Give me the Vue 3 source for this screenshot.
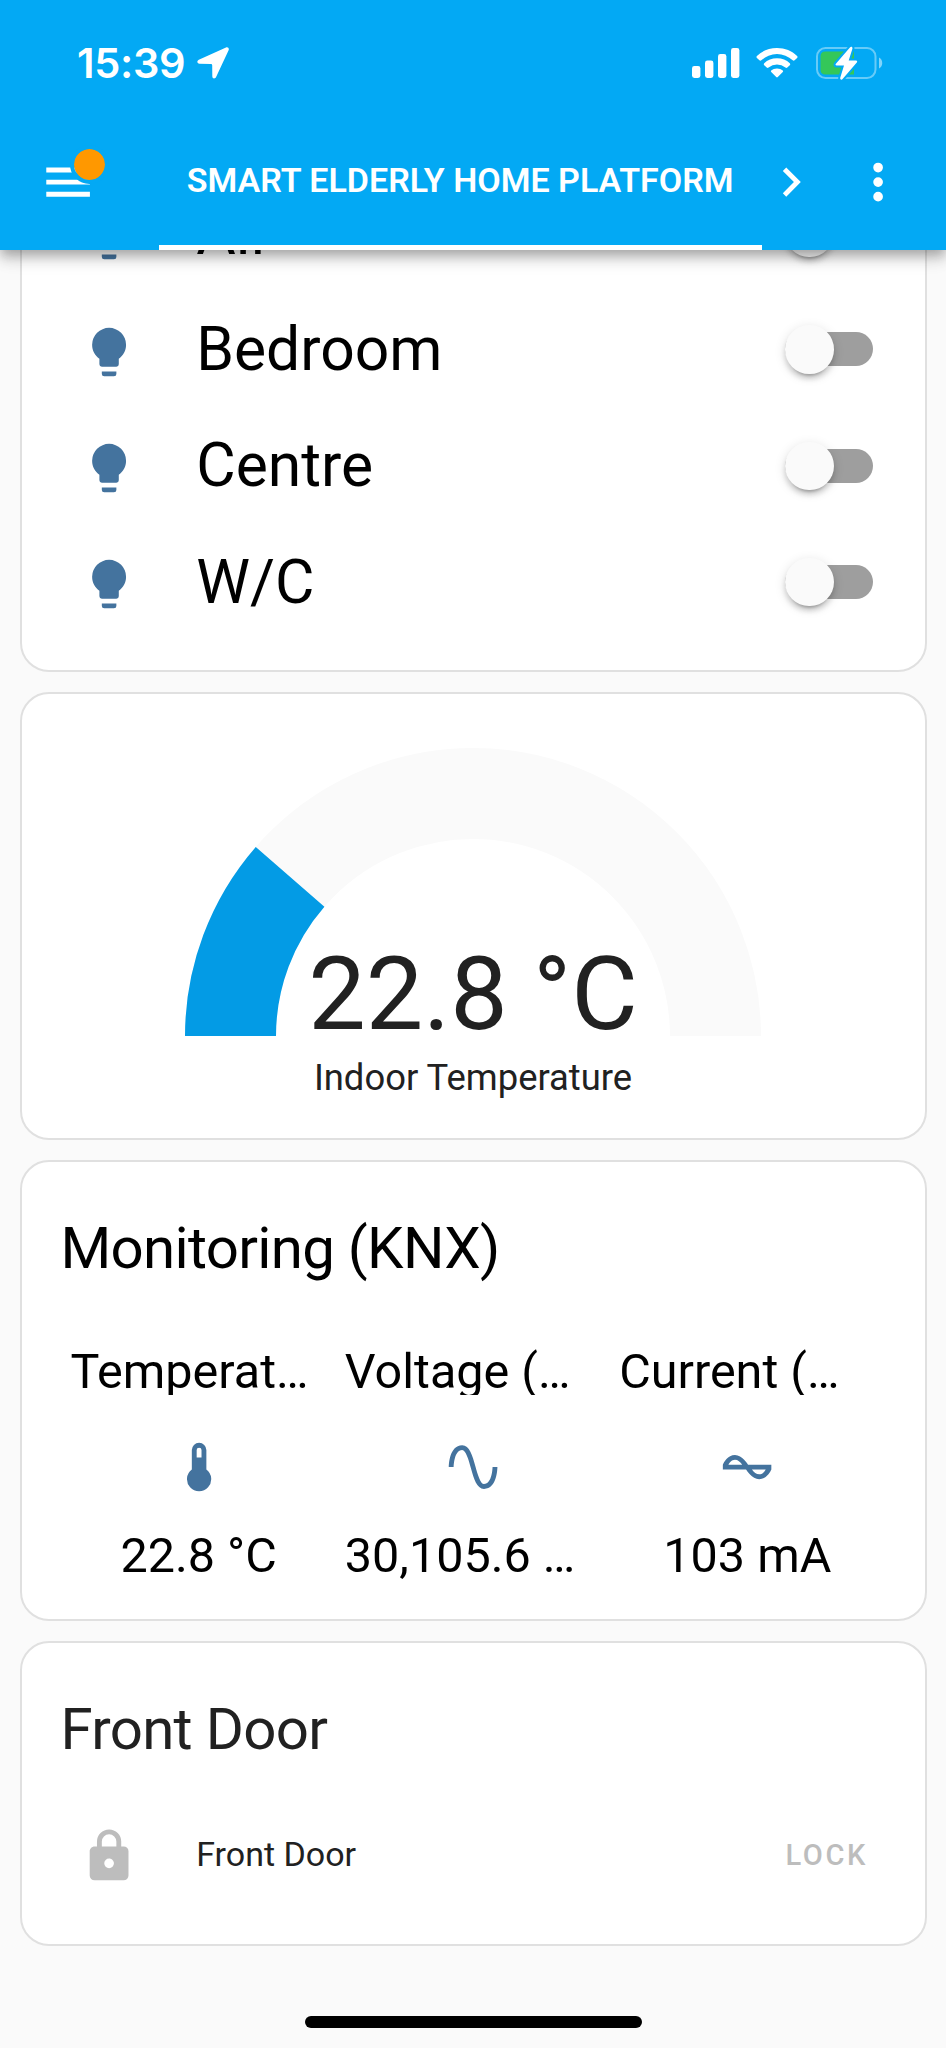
<script setup>
import { computed } from 'vue'

const icons = {
  bulb: 'M12,2A7,7 0 0,0 5,9C5,11.38 6.19,13.47 8,14.74V17A1,1 0 0,0 9,18H15A1,1 0 0,0 16,17V14.74C17.81,13.47 19,11.38 19,9A7,7 0 0,0 12,2M9,21A1,1 0 0,0 10,22H14A1,1 0 0,0 15,21V20H9V21Z',
  lock: 'M12,17A2,2 0 0,0 14,15C14,13.89 13.1,13 12,13A2,2 0 0,0 10,15A2,2 0 0,0 12,17M18,8A2,2 0 0,1 20,10V20A2,2 0 0,1 18,22H6A2,2 0 0,1 4,20V10C4,8.89 4.9,8 6,8H7V6A5,5 0 0,1 12,1A5,5 0 0,1 17,6V8H18M12,3A3,3 0 0,0 9,6V8H15V6A3,3 0 0,0 12,3Z',
  menu: 'M3,6H21V8H3V6M3,11H21V13H3V11M3,16H21V18H3V16Z',
  chevron: 'M8.59,16.58L13.17,12L8.59,7.41L10,6L16,12L10,18L8.59,16.58Z',
  dots: 'M12,16A2,2 0 0,1 14,18A2,2 0 0,1 12,20A2,2 0 0,1 10,18A2,2 0 0,1 12,16M12,10A2,2 0 0,1 14,12A2,2 0 0,1 12,14A2,2 0 0,1 10,12A2,2 0 0,1 12,10M12,4A2,2 0 0,1 14,6A2,2 0 0,1 12,8A2,2 0 0,1 10,6A2,2 0 0,1 12,4Z',
  thermometer: 'M15 13V5A3 3 0 0 0 9 5V13A5 5 0 1 0 15 13M12 4A1 1 0 0 1 13 5V8H11V5A1 1 0 0 1 12 4Z',
  sine: 'M16.5,21C13.5,21 12.31,16.76 11.05,12.28C10.14,9.04 9,5 7.5,5C4.11,5 4,11.93 4,12H2C2,11.63 2.06,3 7.5,3C10.5,3 11.71,7.25 12.97,11.74C13.83,14.8 15,19 16.5,19C19.94,19 20.03,12.07 20.03,12H22.03C22.03,12.37 21.97,21 16.5,21Z',
  current: 'M12.43 11C12.28 10.84 10 7 7 7S2.32 10.18 2 11V13H11.57C11.72 13.16 14 17 17 17S21.68 13.82 22 13V11H12.43M7 9C8.17 9 9.18 9.85 10 11H4.31C4.78 10.17 5.54 9 7 9M17 15C15.83 15 14.82 14.15 14 13H19.69C19.22 13.83 18.46 15 17 15Z'
}

const lights = ['All', 'Bedroom', 'Centre', 'W/C']

const sensors = [
  { name: 'Temperat…', icon: 'thermometer', value: '22.8 °C' },
  { name: 'Voltage (…', icon: 'sine', value: '30,105.6 …', cut: true },
  { name: 'Current (…', icon: 'current', value: '103 mA' }
]

const temperature = 22.8
const arc = computed(() => {
  const a = Math.PI * (1 - temperature / 100)
  return `M45.5 288A242.5 242.5 0 0 1 ${288 + 242.5 * Math.cos(a)} ${288 - 242.5 * Math.sin(a)}`
})
</script>

<template>
  <div class="screen">
    <header class="header">
      <div class="status">
        <span class="time">15:39</span>
        <svg class="location" viewBox="0 0 32 32"><path d="M29 .5 1.800 12.700C-.4 13.700 0 16.700 2.400 16.800L14 17Q15.200 17 15.200 18.200L15.300 29.300C15.400 32 18 32.300 19.100 30.100L31.600 3.200C32.400 1.300 30.900-.3 29 .5Z" /></svg>
        <svg class="signal" viewBox="0 0 48 32">
          <rect x="0" y="19" width="8.4" height="12" rx="2.4" />
          <rect x="13" y="13.5" width="8.4" height="17.5" rx="2.4" />
          <rect x="26" y="7" width="8.4" height="24" rx="2.4" />
          <rect x="39" y="1" width="8.4" height="30" rx="2.4" />
        </svg>
        <svg class="wifi" viewBox="0 0 42 32">
          <path d="M21 1C13 1 6 4 .9 8.900Q0 9.900 .9 10.900L3.400 13.300Q4.300 14.100 5.300 13.300A23 23 0 0 1 36.700 13.300Q37.700 14.100 38.600 13.300L41.100 10.900Q42 9.900 41.100 8.900C36 4 29 1 21 1Z" />
          <path d="M21 11.300C16 11.300 11.500 13.200 8.200 16.200Q7.200 17.200 8.200 18.200L10.700 20.600Q11.600 21.400 12.600 20.600A12.800 12.800 0 0 1 29.400 20.600Q30.400 21.400 31.300 20.600L33.800 18.200Q34.800 17.200 33.800 16.200C30.500 13.200 26 11.300 21 11.300Z" />
          <path d="M21 21.400C18.700 21.400 16.700 22.200 15.200 23.500Q14.500 24.300 15.200 25L20.200 30Q21 30.800 21.800 30L26.800 25Q27.500 24.300 26.800 23.500C25.300 22.200 23.300 21.400 21 21.400Z" />
        </svg>
        <svg class="battery" viewBox="0 0 68 34">
          <rect class="battery-shell" x="1" y="2" width="58.500" height="30" rx="8.500" />
          <path class="battery-tip" d="M63 11.500C67.300 13.500 67.300 20.500 63 22.500Z" />
          <path class="battery-level" d="M9.500 5.500H38V28.500H9.500Q4.500 28.500 4.500 23.500V10.500Q4.500 5.500 9.500 5.500Z" />
          <path class="bolt" d="M33.900 1.500 19.900 17.800Q18.800 19.500 20.800 19.600H28L24.300 31.600C23.700 33.700 25.600 34.400 26.800 32.800L40.800 16.400Q41.900 14.700 39.900 14.600H32.700L36.400 2.700C36.800.8 35.100 0 33.900 1.500Z" />
        </svg>
      </div>
      <div class="toolbar">
        <div class="menu">
          <svg class="icon" viewBox="0 0 24 24"><path :d="icons.menu" /></svg>
          <span class="dot"></span>
        </div>
        <div class="tab">SMART ELDERLY HOME PLATFORM</div>
        <svg class="icon next" viewBox="0 0 24 24"><path :d="icons.chevron" /></svg>
        <svg class="icon more" viewBox="0 0 24 24"><path :d="icons.dots" /></svg>
      </div>
    </header>

    <main class="view">
      <section class="card lights">
        <div v-for="name in lights" :key="name" class="row">
          <svg class="icon blue" viewBox="0 0 24 24"><path :d="icons.bulb" /></svg>
          <span class="name">{{ name }}</span>
          <span class="switch"><span class="thumb"></span></span>
        </div>
      </section>

      <section class="card gauge">
        <svg class="dial" viewBox="0 0 576 288">
          <path class="dial-track" d="M45.500 288A242.500 242.500 0 0 1 530.500 288" />
          <path class="dial-value" :d="arc" />
        </svg>
        <div class="reading">22.8 °C</div>
        <div class="label">Indoor Temperature</div>
      </section>

      <section class="card glance">
        <h2 class="title black">Monitoring (KNX)</h2>
        <div class="sensors">
          <div v-for="s in sensors" :key="s.name" class="sensor">
            <div class="sensor-name">{{ s.name }}</div>
            <svg class="icon blue" viewBox="0 0 24 24"><path :d="icons[s.icon]" /></svg>
            <div class="sensor-value" :class="{ cut: s.cut }">{{ s.value }}</div>
          </div>
        </div>
      </section>

      <section class="card door">
        <h2 class="title">Front Door</h2>
        <div class="door-row">
          <svg class="icon grey" viewBox="0 0 24 24"><path :d="icons.lock" /></svg>
          <span class="door-name">Front Door</span>
          <span class="lock-button">LOCK</span>
        </div>
      </section>
    </main>
    <div class="home-bar"></div>
  </div>
</template>

<style>
body {
  background: #fafafa;
}
</style>

<style scoped>
.screen {
  width: 946px;
  height: 2048px;
  overflow: hidden;
  display: flex;
  flex-direction: column;
  background: #fafafa;
  font-family: Roboto, "Liberation Sans", sans-serif;
  color: #212121;
}
.screen * {
  box-sizing: border-box;
}
svg {
  display: block;
  flex: none;
}
.icon {
  width: 58.2px;
  height: 58.2px;
  fill: currentColor;
}
.blue {
  color: #44739e;
}
.grey {
  color: #bdbdbd;
}

.header {
  position: relative;
  z-index: 1;
  flex: none;
  height: 250px;
  background: #03a9f4;
  color: #fff;
  box-shadow: 0 5px 10px -2px rgba(0, 0, 0, 0.2), 0 10px 12px rgba(0, 0, 0, 0.14), 0 2px 24px rgba(0, 0, 0, 0.12);
}
.status {
  height: 114px;
  padding: 12px 62px 0 77px;
  display: flex;
  align-items: center;
  fill: #fff;
}
.time {
  width: 119.500px;
  font-family: Inter, "Liberation Sans", sans-serif;
  font-size: 41.500px;
  font-weight: 600;
  letter-spacing: -0.300px;
  line-height: 48px;
}
.location {
  width: 32px;
  height: 32px;
}
.signal {
  width: 48px;
  height: 32px;
  margin-left: auto;
}
.wifi {
  width: 42px;
  height: 32px;
  margin-left: 16px;
}
.battery {
  width: 68px;
  height: 34px;
  margin-left: 18px;
}
.battery-shell {
  fill: none;
  stroke: rgba(255, 255, 255, 0.4);
  stroke-width: 2;
}
.battery-tip {
  fill: rgba(255, 255, 255, 0.5);
}
.battery-level {
  fill: #34c759;
}
.bolt {
  stroke: #03a9f4;
  stroke-width: 4;
  paint-order: stroke;
}
.toolbar {
  height: 136px;
  display: flex;
  align-items: center;
}
.menu {
  position: relative;
  margin-left: 39px;
}
.dot {
  position: absolute;
  left: 31px;
  top: -7.500px;
  width: 39px;
  height: 39px;
  border-radius: 50%;
  border: 4.800px solid #03a9f4;
  background: #ff9800;
  background-clip: padding-box;
}
.tab {
  width: 603px;
  height: 136px;
  margin-left: 61.500px;
  border-bottom: 5px solid #fff;
  padding-top: 1px;
  text-align: center;
  font-size: 34px;
  font-weight: 600;
  line-height: 131px;
  white-space: nowrap;
}
.next {
  margin-left: 0;
}
.more {
  margin-left: 29px;
}

.view {
  flex: none;
  padding: 0 19.500px;
  display: flex;
  flex-direction: column;
  gap: 20px;
}
.card {
  background: #fff;
  border: 2px solid #e0e0e0;
  border-radius: 29px;
}

.lights {
  height: 522px;
  margin-top: -100px;
  padding: 32.500px 52px 0 58px;
  display: flex;
  flex-direction: column;
  gap: 19.400px;
}
.row {
  height: 97px;
  display: flex;
  align-items: center;
}
.row .icon {
  margin-top: 4.500px;
}
.name {
  margin-left: 58.500px;
  flex: 1;
  color: #000;
  font-size: 60.600px;
  line-height: 71px;
}
.switch {
  width: 87.300px;
  height: 34px;
  border-radius: 17px;
  background: #9e9e9e;
  display: flex;
  align-items: center;
}
.thumb {
  flex: none;
  width: 48.500px;
  height: 48.500px;
  border-radius: 50%;
  background: #fafafa;
  box-shadow: 0 7px 2.500px -5px rgba(0, 0, 0, 0.2), 0 5px 5px rgba(0, 0, 0, 0.14), 0 2.500px 12px rgba(0, 0, 0, 0.12);
}

.gauge {
  height: 448px;
  padding-top: 54px;
  display: flex;
  flex-direction: column;
  align-items: center;
}
.dial {
  width: 576px;
  height: 288px;
}
.dial path {
  fill: none;
  stroke-width: 91px;
}
.dial-track {
  stroke: #fafafa;
}
.dial-value {
  stroke: #039be5;
}
.reading {
  margin-top: -102px;
  font-size: 102.300px;
  line-height: 120px;
}
.label {
  margin-top: 2px;
  font-size: 36.400px;
  line-height: 44px;
}

.glance {
  height: 460.500px;
  padding: 51px 40px 0;
}
.title {
  margin: 0 0 0 -1px;
  font-size: 58.200px;
  line-height: 70px;
  font-weight: 400;
  letter-spacing: -0.012em;
}
.black {
  color: #000;
}
.sensors {
  margin-top: 55.500px;
  display: grid;
  grid-template-columns: repeat(3, 1fr);
}
.sensor {
  padding: 0 9px;
  display: flex;
  flex-direction: column;
  align-items: center;
  color: #000;
  font-size: 48.500px;
  white-space: nowrap;
}
.sensor-name {
  align-self: stretch;
  height: 56px;
  line-height: 66px;
  overflow: hidden;
}
.sensor .icon {
  margin-top: 43.500px;
}
.sensor-value {
  margin-top: 31px;
  line-height: 57px;
}
.cut {
  align-self: stretch;
}

.door {
  height: 305px;
  padding: 51px 56.500px 0 40px;
}
.door-row {
  height: 97px;
  margin-top: 42px;
  padding-left: 18px;
  display: flex;
  align-items: center;
}
.door-row .icon {
  margin-top: 4px;
}
.door-name {
  margin-left: 58.500px;
  margin-top: -1px;
  flex: 1;
  font-size: 34px;
  line-height: 40px;
}
.lock-button {
  margin-top: 2px;
  color: #bdbdbd;
  font-size: 29.100px;
  font-weight: 500;
  letter-spacing: 2.600px;
  line-height: 40px;
}

.home-bar {
  width: 337px;
  height: 12px;
  margin: 70.500px 0 0 305px;
  border-radius: 6px;
  background: #000;
}
</style>
